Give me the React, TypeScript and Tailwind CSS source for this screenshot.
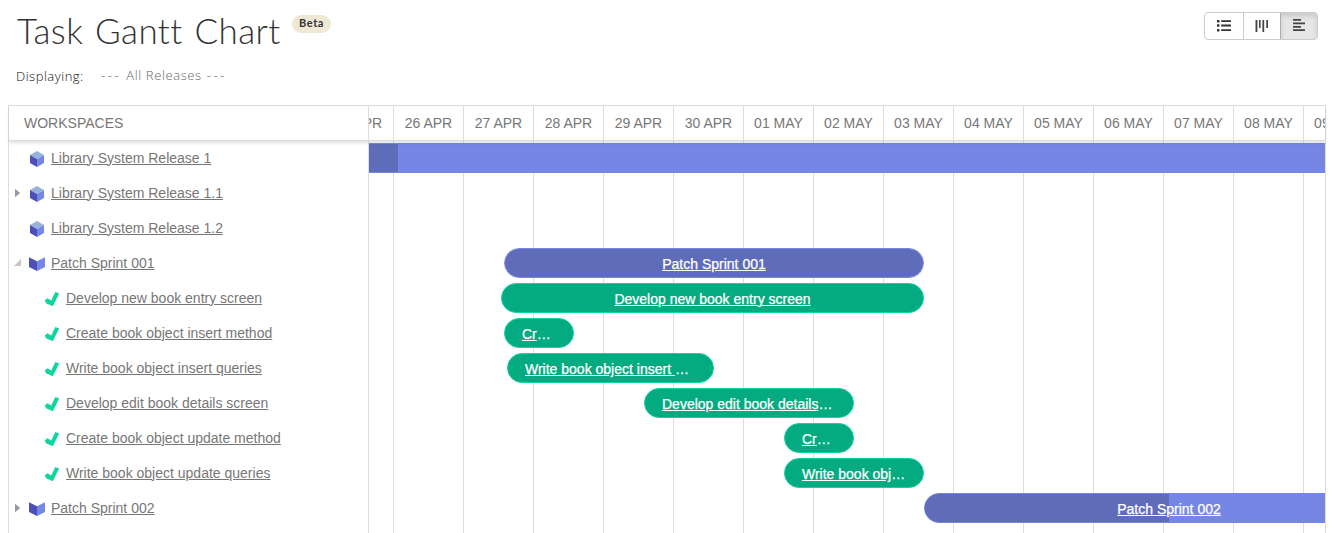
import React from 'react';

type Kind = 'release' | 'sprint' | 'task';
type Row = {
  name: string;
  kind: Kind;
  arrow?: 'closed' | 'open';
  start?: number;
  width?: number;
  progress?: number;
  hideLabel?: boolean;
};

// Bar offsets and widths are in timeline pixels; one day is 70 pixels wide.
const rows: Row[] = [
  { name: 'Library System Release 1', kind: 'release', start: -400, width: 2400, progress: 428, hideLabel: true },
  { name: 'Library System Release 1.1', kind: 'release', arrow: 'closed' },
  { name: 'Library System Release 1.2', kind: 'release' },
  { name: 'Patch Sprint 001', kind: 'sprint', arrow: 'open', start: 135, width: 420, progress: 418 },
  { name: 'Develop new book entry screen', kind: 'task', start: 132, width: 423 },
  { name: 'Create book object insert method', kind: 'task', start: 135, width: 70 },
  { name: 'Write book object insert queries', kind: 'task', start: 138, width: 207 },
  { name: 'Develop edit book details screen', kind: 'task', start: 275, width: 210 },
  { name: 'Create book object update method', kind: 'task', start: 415, width: 70 },
  { name: 'Write book object update queries', kind: 'task', start: 415, width: 140 },
  { name: 'Patch Sprint 002', kind: 'sprint', arrow: 'closed', start: 555, width: 490, progress: 244 },
];

const days = [
  '25 APR', '26 APR', '27 APR', '28 APR', '29 APR', '30 APR', '01 MAY', '02 MAY',
  '03 MAY', '04 MAY', '05 MAY', '06 MAY', '07 MAY', '08 MAY', '09 MAY',
];

function ReleaseIcon() {
  return (
    <svg width="16" height="16" viewBox="0 0 16 16">
      <path d="M8 0 15 4 8 8 1 4Z" fill="#98b3d9" />
      <path d="M1 4 8 8V16L1 12Z" fill="#4c4fb8" />
      <path d="M15 4 8 8V16L15 12Z" fill="#7586e5" />
    </svg>
  );
}

function SprintIcon() {
  return (
    <svg width="16" height="16" viewBox="0 0 16 16">
      <path d="M0 1.3 8 5.3V15L0 11Z" fill="#4c4fb8" />
      <path d="M16 1.3 8 5.3V15L16 11Z" fill="#7586e5" />
    </svg>
  );
}

function TaskIcon() {
  return (
    <svg width="16" height="16" viewBox="0 0 16 16">
      <path d="M.8 9.6 3.4 7.3 7.2 9.4 11.3 1 15.2 2.6 8.8 15.2 2 12.2Z" fill="#0fd6a0" />
    </svg>
  );
}

function Arrow({ state }: { state?: 'closed' | 'open' }) {
  return (
    <svg width="8" height="10" viewBox="0 0 8 10" className="shrink-0">
      {state === 'closed' && <path d="M1 .7 6.2 5 1 9.3Z" fill="#999" />}
      {state === 'open' && <path d="M7 1V8H0Z" fill="#c4c4c4" />}
    </svg>
  );
}

function WorkspaceRow({ row }: { row: Row }) {
  return (
    <div className="flex h-[35px] items-center pb-[2px] pl-[5px]">
      <Arrow state={row.arrow} />
      <span className={row.kind === 'task' ? 'ml-[22px] mt-[2px]' : 'ml-[7px] mt-[2px]'}>
        {row.kind === 'release' && <ReleaseIcon />}
        {row.kind === 'sprint' && <SprintIcon />}
        {row.kind === 'task' && <TaskIcon />}
      </span>
      <a className="ml-[6px] whitespace-nowrap text-[14px] leading-[20px] text-[#777] underline">{row.name}</a>
    </div>
  );
}

function Bar({ row }: { row: Row }) {
  if (row.start === undefined) return null;
  const task = row.kind === 'task';
  return (
    <div
      className={
        'relative grid h-[30px] shrink-0 overflow-hidden rounded-full border ' +
        (task ? 'border-[#0fd6a0] bg-[#05ab80]' : 'border-[#7586e5] bg-[#7586e5]')
      }
      style={{ marginLeft: row.start, width: row.width }}
    >
      {!task && <div className="col-start-1 row-start-1 bg-[#5f6cb9]" style={{ width: row.progress }} />}
      {!row.hideLabel && (
        <div className="z-10 col-start-1 row-start-1 min-w-0 truncate px-[17px] text-center text-[14px] leading-[30px] text-white [-webkit-text-stroke:0.25px_white]">
          <a className="underline">{row.name}</a>
        </div>
      )}
    </div>
  );
}

function ViewSwitch() {
  return (
    <div className="flex h-[28px] w-[114px] overflow-hidden rounded-[4px] border border-[#ccc]">
      <button className="flex w-[39px] items-center justify-center border-r border-[#ccc]">
        <svg width="16" height="14" viewBox="0 0 16 14" fill="#333" className="-mt-px">
          <path d="M1 1h2.4v2.4H1zM1 5.3h2.4v2.4H1zM1 10h2.4v2.4H1zM5.2 1.2H15V3H5.2zM5.2 5.6H15v1.8H5.2zM5.2 10.2H15V12H5.2z" />
        </svg>
      </button>
      <button className="flex w-[36px] items-center justify-center">
        <svg width="14" height="14" viewBox="0 0 14 14" fill="#444" className="-mt-px">
          <path d="M0.5 1h1.9v12H.5zM4 1h1.6v8H4zM7.4 1h1.8v12H7.4zM11.3 1h1.7v8h-1.7z" />
        </svg>
      </button>
      <button className="flex flex-1 items-center justify-center border-l border-[#adadad] bg-[#e6e6e6] shadow-[inset_0_3px_5px_rgba(0,0,0,0.125)]">
        <svg width="14" height="14" viewBox="0 0 14 14" fill="#444" className="-mt-[2px]">
          <path d="M1 1h8v1.8H1zM1 4.5h12v1.8H1zM1 8h8v1.7H1zM1 11.3h12v1.8H1z" />
        </svg>
      </button>
    </div>
  );
}

export default function App() {
  return (
    <div className="flex h-[533px] w-[1332px] flex-col overflow-hidden bg-white font-['Liberation_Sans',sans-serif]">
      <header className="flex h-[57px] shrink-0 items-start pl-[17px] pr-[14px] pt-[12px]">
        <h1 className="w-[275px] whitespace-nowrap font-['Lato',sans-serif] text-[35px] font-light leading-[36px] tracking-[0.4px] text-[#333] [word-spacing:2px]">
          Task Gantt Chart
        </h1>
        <span className="mt-[3px] flex h-[18px] w-[39px] items-center justify-center rounded-full bg-[#efe8d5] pb-px font-['Lato',sans-serif] text-[11px] font-bold tracking-[0.6px] text-[#333]">
          Beta
        </span>
        <div className="ml-auto">
          <ViewSwitch />
        </div>
      </header>
      <div className="flex h-[48px] shrink-0 pl-[16px] pt-[9px] font-['Open_Sans',sans-serif] text-[13px] font-light leading-[20px]">
        <span className="w-[85px] tracking-[0.5px] text-[#111]">Displaying:</span>
        <span className="-mt-px flex gap-[5px] tracking-[0.6px] text-[#666]">
          <span className="tracking-[2.6px]">---</span>
          <span>All Releases</span>
          <span className="tracking-[2.6px]">---</span>
        </span>
      </div>

      <main className="ml-[8px] flex w-[1318px] flex-1 flex-col border border-b-0 border-[#ddd]">
        <div className="z-20 flex h-[35px] shrink-0 border-b border-[#ddd] text-[14px] leading-[34px] text-[#777] shadow-[0_2px_3px_rgba(0,0,0,0.12)]">
          <div className="w-[360px] shrink-0 border-r border-[#ddd] pl-[15px]">WORKSPACES</div>
          <div className="flex flex-1 overflow-hidden">
            {days.map((day, i) => (
              <div
                key={day}
                className={
                  'w-[70px] shrink-0 whitespace-nowrap border-r border-[#ddd] text-center ' + (i === 0 ? '-ml-[45px]' : '')
                }
              >
                {day}
              </div>
            ))}
          </div>
        </div>
        <div className="flex flex-1">
          <div className="w-[360px] shrink-0 border-r border-[#ddd]">
            {rows.map((row) => (
              <WorkspaceRow key={row.name} row={row} />
            ))}
          </div>
          <div className="relative min-w-0 flex-1 overflow-hidden">
            <div className="absolute inset-0 flex">
              {days.map((day, i) => (
                <div key={day} className={'w-[70px] shrink-0 border-r border-[#ddd] ' + (i === 0 ? '-ml-[45px]' : '')} />
              ))}
            </div>
            {rows.map((row) => (
              <div key={row.name} className="flex h-[35px] pt-[2px]">
                <Bar row={row} />
              </div>
            ))}
          </div>
        </div>
      </main>
    </div>
  );
}
